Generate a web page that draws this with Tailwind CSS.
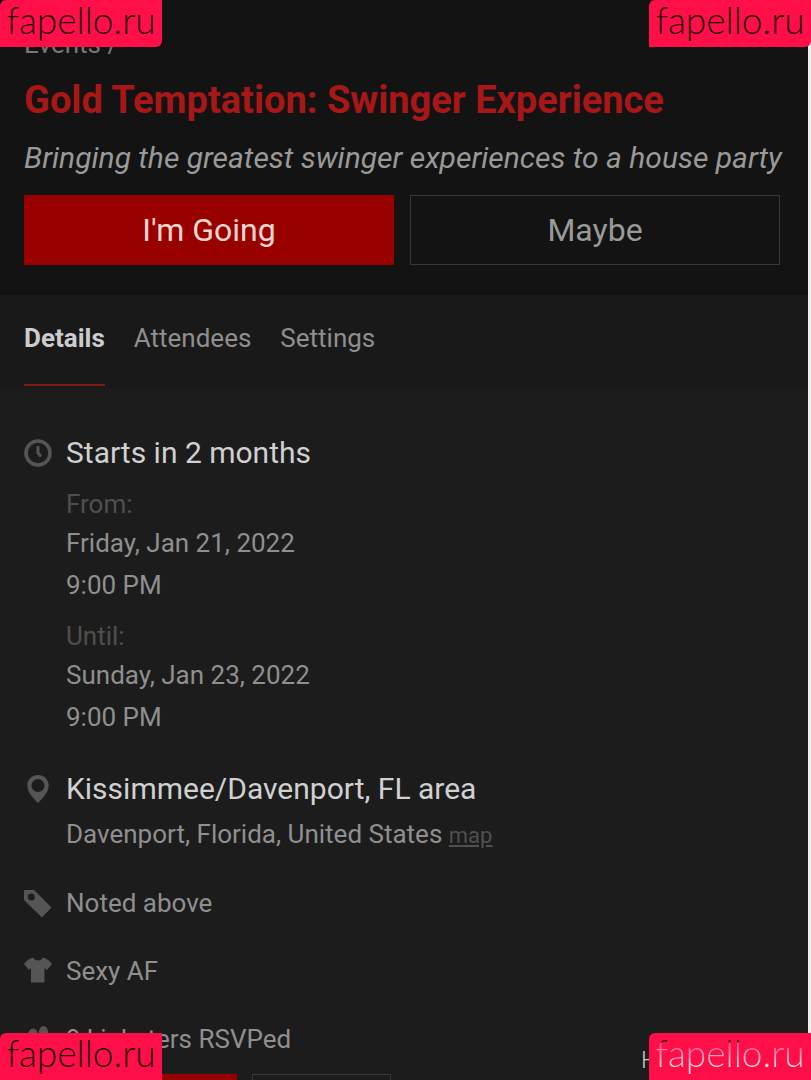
<!DOCTYPE html>
<html lang="en">
<head>
  <meta charset="UTF-8">
  <meta name="viewport" content="width=device-width, initial-scale=1.0">
  <title>Gold Temptation: Swinger Experience</title>
  <script src="https://cdn.jsdelivr.net/npm/@tailwindcss/browser@4"></script>
</head>
<body class="bg-[#f1eeee] font-['Roboto',sans-serif] text-[26px] text-[#8f8f8f]">
  <div class="relative h-screen overflow-hidden">
    <div class="mr-[3px] min-h-screen bg-[#1c1c1c]">

      <!-- Event header -->
      <header class="bg-[#131313] px-6 pt-[26px] pb-[30px]">
        <nav aria-label="Breadcrumb" class="leading-9 text-[#777]"><a href="#">Events</a> /</nav>
        <h1 class="mt-[14px] text-[38px] leading-12 font-bold whitespace-nowrap text-[#a81717]">Gold Temptation: Swinger Experience</h1>
        <p class="mt-4 text-[30px] leading-9 whitespace-nowrap text-[#999] italic">Bringing the greatest swinger experiences to a house party</p>
        <div class="mt-[19px] mr-1 grid grid-cols-2 gap-4 text-[32px]">
          <button type="button" class="h-[70px] bg-[#980000] text-[#ffd6d0]">I'm Going</button>
          <button type="button" class="h-[70px] border border-[#383838] text-[#999]">Maybe</button>
        </div>
      </header>

      <!-- Tabs -->
      <nav aria-label="Event" class="flex h-[93px] gap-[29px] bg-[#191919] px-6 leading-[87px]">
        <a href="#" class="h-[91px] border-b-2 border-[#7f1a18] font-bold text-[#ccc]">Details</a>
        <a href="#">Attendees</a>
        <a href="#">Settings</a>
      </nav>

      <!-- Details -->
      <main class="px-6 pt-[45px] leading-[42px]">
        <section class="flex gap-[14px]">
          <svg class="mt-1.5 size-7 shrink-0" viewBox="0 0 28 28" fill="none" stroke="#555" aria-hidden="true">
            <circle cx="14" cy="14" r="12" stroke-width="3.6"/>
            <path d="M14 7v7l3 3.6" stroke-width="3"/>
          </svg>
          <div>
            <h2 class="text-[30px] leading-10 text-[#d0d0d0]">Starts in 2 months</h2>
            <p class="mt-[13px] leading-9 text-[#4f4f4f]">From:</p>
            <p>Friday, Jan 21, 2022</p>
            <p>9:00 PM</p>
            <p class="mt-3 leading-9 text-[#4f4f4f]">Until:</p>
            <p>Sunday, Jan 23, 2022</p>
            <p>9:00 PM</p>
          </div>
        </section>

        <section class="mt-[31px] flex gap-[14px]">
          <svg class="mt-1.5 size-7 shrink-0" viewBox="0 0 28 28" fill="#555" aria-hidden="true">
            <path fill-rule="evenodd" d="M14 0C8 0 3.3 4.7 3.3 10.4C3.3 17.4 9.5 23 14 28C18.500 23 24.700 17.400 24.700 10.400C24.700 4.700 20 0 14 0ZM14 4A6.500 6.500 0 1 1 14 17A6.500 6.500 0 1 1 14 4Z"/>
          </svg>
          <div>
            <h2 class="text-[30px] leading-10 text-[#d0d0d0]">Kissimmee/Davenport, FL area</h2>
            <p class="mt-1">Davenport, Florida, United States <a href="#" class="text-[22px] text-[#505050] underline">map</a></p>
          </div>
        </section>

        <ul class="mt-[25px] grid gap-[26px]">
          <li class="flex gap-[14px]">
            <svg class="mt-2 size-7 shrink-0" viewBox="0 0 28 28" fill="#555" aria-hidden="true">
              <path fill-rule="evenodd" d="M0 0H10L27.500 17.500L18 27.500L0 10ZM7.300 3.500A3.500 3.500 0 1 0 7.300 10.500A3.500 3.500 0 1 0 7.300 3.500Z"/>
            </svg>
            <p>Noted above</p>
          </li>
          <li class="flex gap-[14px]">
            <svg class="mt-1.5 size-7 shrink-0" viewBox="0 0 28 28" fill="#555" aria-hidden="true">
              <path d="M9 1.500C11 5.500 17 5.500 19 1.500C23 2.500 25.500 5 28 8L23 14L20.500 12V26.500H7V12L5 14L0 8C2.500 5 5 2.500 9 1.500Z"/>
            </svg>
            <p>Sexy AF</p>
          </li>
          <li class="flex gap-[14px]">
            <svg class="mt-2 size-7 shrink-0" viewBox="0 0 28 28" fill="#555" aria-hidden="true">
              <ellipse cx="19.500" cy="6" rx="4.500" ry="6"/>
              <ellipse cx="9" cy="9" rx="5" ry="6.500"/>
              <path d="M0 27C0 20 4 17 9 17S18 20 18 27ZM18 15C23 14 28 17 28 23H20Z"/>
            </svg>
            <p>9 kinksters RSVPed</p>
          </li>
        </ul>

        <div class="mt-[14px] flex gap-[15px]">
          <button type="button" aria-label="I'm Going" class="h-14 w-[213px] bg-[#980000]"></button>
          <button type="button" aria-label="Maybe" class="h-14 w-[139px] border border-[#383838]"></button>
        </div>
      </main>
    </div>

    <!-- Corner stamps -->
    <div class="font-['Lato',sans-serif] text-[37px] leading-10 font-light text-[#2a0710]">
      <div class="absolute top-0 left-0 h-[47px] w-[162px] rounded-tl-md rounded-br-md bg-[#ff0f47] text-center">fapello.ru</div>
      <div class="absolute top-0 right-0 h-[47px] w-[162px] rounded-tl-md rounded-br-md bg-[#ff0f47] text-center">fapello.ru</div>
      <div class="absolute bottom-0 left-0 h-[47px] w-[162px] rounded-tl-md bg-[#ff0f47] text-center">fapello.ru</div>
      <div class="absolute right-[153px] bottom-0 font-['Roboto',sans-serif] text-[24px] leading-10 text-[#ccc]">H</div>
      <div class="absolute right-0 bottom-0 h-[47px] w-[162px] rounded-tl-md bg-[#ff0f47] text-center">
        <span class="bg-linear-to-b from-[#2a0710] from-25% via-[#ff4d91] via-30% to-[#ffd9e5] to-80% bg-clip-text text-transparent">fapello.ru</span>
      </div>
    </div>
  </div>
</body>
</html>
